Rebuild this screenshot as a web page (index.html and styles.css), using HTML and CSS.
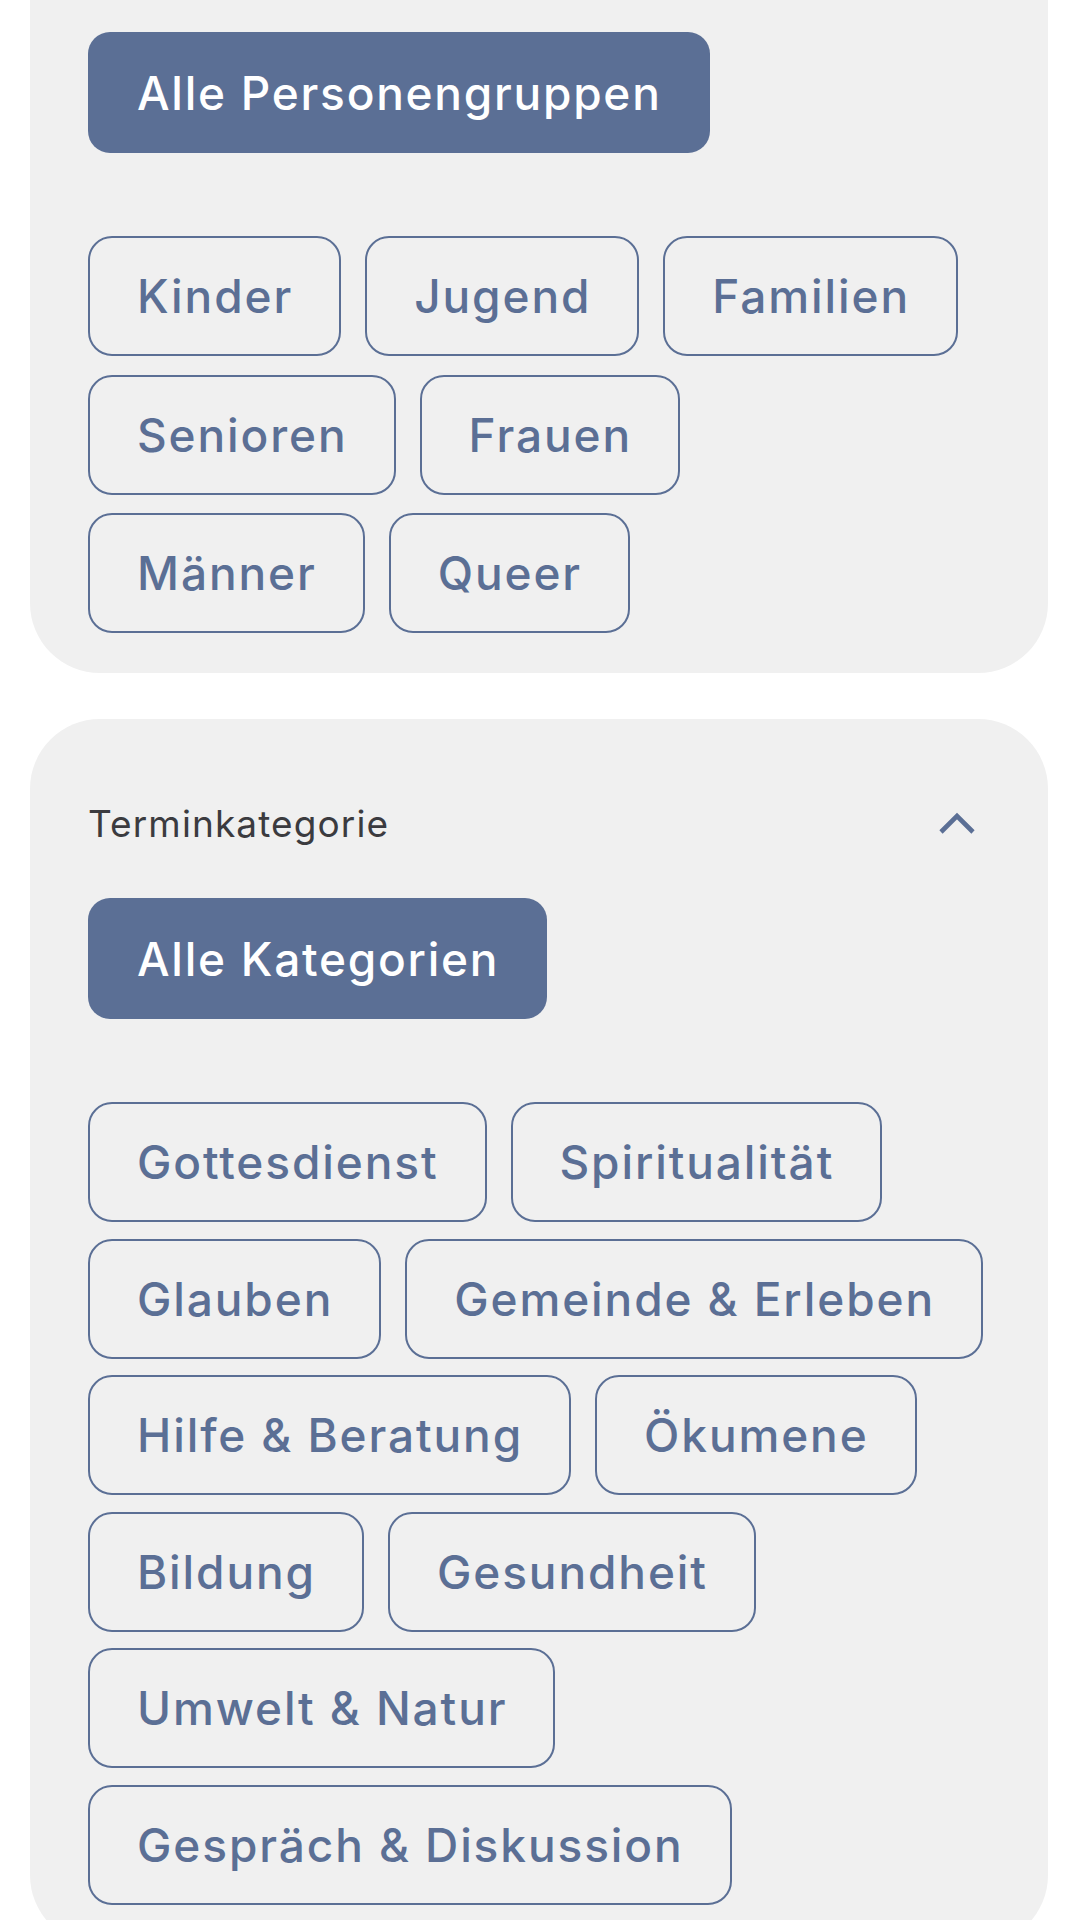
FILE: index.html
```html
<!DOCTYPE html>
<html lang="de">
<head>
<meta charset="utf-8">
<title>Filter</title>
<link rel="stylesheet" href="styles.css">
</head>
<body>
<div class="page">
  <section class="card card-first">
    <button class="btn-primary">Alle Personengruppen</button>
    <div class="chips chips-loose">
      <div class="chip-row">
        <button class="chip">Kinder</button>
        <button class="chip">Jugend</button>
        <button class="chip">Familien</button>
      </div>
      <div class="chip-row">
        <button class="chip">Senioren</button>
        <button class="chip">Frauen</button>
      </div>
      <div class="chip-row">
        <button class="chip">Männer</button>
        <button class="chip">Queer</button>
      </div>
    </div>
  </section>

  <section class="card">
    <div class="card-header">
      <span class="card-title">Terminkategorie</span>
      <svg class="chevron" width="38" height="24" viewBox="0 0 38 24" aria-hidden="true">
        <path d="M3 21 L19 5 L35 21" fill="none" stroke="#5b6f95" stroke-width="4.6" stroke-linecap="butt" stroke-linejoin="miter"/>
      </svg>
    </div>
    <button class="btn-primary">Alle Kategorien</button>
    <div class="chips chips-tight">
      <div class="chip-row">
        <button class="chip">Gottesdienst</button>
        <button class="chip">Spiritualität</button>
      </div>
      <div class="chip-row">
        <button class="chip">Glauben</button>
        <button class="chip">Gemeinde &amp; Erleben</button>
      </div>
      <div class="chip-row">
        <button class="chip">Hilfe &amp; Beratung</button>
        <button class="chip">Ökumene</button>
      </div>
      <div class="chip-row">
        <button class="chip">Bildung</button>
        <button class="chip">Gesundheit</button>
      </div>
      <div class="chip-row">
        <button class="chip">Umwelt &amp; Natur</button>
      </div>
      <div class="chip-row">
        <button class="chip">Gespräch &amp; Diskussion</button>
      </div>
    </div>
  </section>
</div>
</body>
</html>
```

FILE: styles.css
```css
* {
  box-sizing: border-box;
}

html, body {
  margin: 0;
  padding: 0;
  background: #ffffff;
}

body {
  font-family: Inter, "Noto Sans", "Liberation Sans", sans-serif;
  overflow: hidden;
}

.page {
  display: flex;
  flex-direction: column;
  gap: 46px;
  padding: 0 32px 0 30px;
}

.card {
  background: #f0f0f0;
  border-radius: 70px;
  padding: 80px 58px 40px 58px;
  display: flex;
  flex-direction: column;
  align-items: flex-start;
}

.card-first {
  margin-top: -70px;
  padding-top: 102px;
  padding-bottom: 40px;
}

.card-header {
  width: 100%;
  height: 48px;
  display: flex;
  align-items: center;
  justify-content: space-between;
  margin-bottom: 51px;
  padding-right: 14px;
}

.card-title {
  font-size: 37px;
  font-weight: 400;
  color: #3b3b3f;
  letter-spacing: 1.1px;
}

.chevron {
  display: block;
}

.btn-primary {
  font-family: inherit;
  height: 121px;
  padding: 0 48px 0 49px;
  border: none;
  border-radius: 22px;
  background: #5b6f95;
  color: #ffffff;
  font-size: 46px;
  font-weight: 500;
  letter-spacing: 1.75px;
  line-height: 1;
}

.chips {
  margin-top: 83px;
  display: flex;
  flex-direction: column;
  width: 100%;
}

.chips-loose {
  gap: 18.5px;
}

.chips-tight {
  gap: 16.5px;
}

.chip-row {
  display: flex;
  gap: 24px;
}

.chip {
  font-family: inherit;
  height: 120px;
  padding: 0 46px 0 47px;
  border: 2.5px solid #5b6f95;
  border-radius: 24px;
  background: transparent;
  color: #5b6f95;
  font-size: 46px;
  font-weight: 500;
  letter-spacing: 1.9px;
  line-height: 1;
}
```
